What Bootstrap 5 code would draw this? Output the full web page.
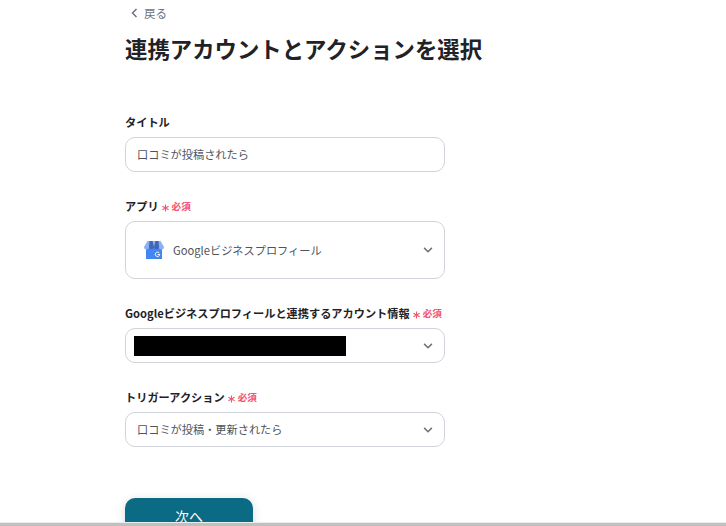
<!DOCTYPE html>
<html lang="ja">
    <head>
        <meta charset="UTF-8">
        <meta name="viewport" content="width=device-width, initial-scale=1.0">
        <title>連携アカウントとアクションを選択</title>
        <link href="https://cdn.jsdelivr.net/npm/bootstrap@5.3.2/dist/css/bootstrap.min.css" rel="stylesheet">
        <style>
            html, body { height: 100%; overflow: hidden; }
            body { font-family: "Noto Sans CJK JP", "Noto Sans", sans-serif; color: #212529; background: #fff; }
            .page-wrap { width: 320px; margin-left: 125px; padding-top: 5px; }
            .back-link { font-size: 11.5px; line-height: 16px; color: #6b7280; text-decoration: none; gap: 6px; padding-left: 6px; }
            .page-title { font-size: 22.4px; font-weight: 700; line-height: 32px; margin: 11px 0 50px; color: #1f2226; white-space: nowrap; }
            .field-block { margin-bottom: 26px; }
            .field-label { font-size: 11.2px; line-height: 16px; font-weight: 700; color: #1f2226; margin-bottom: 7px; gap: 3px; white-space: nowrap; }
            .req-mark { color: #f2536f; font-size: 9.6px; font-weight: 700; }
            .req-star { color: #f2536f; width: 7px; height: 8px; margin-top: 3px; flex: none; }
            .field-box { height: 35px; border: 1px solid #d0d3da; border-radius: 10px; padding: 0 11px; font-size: 11.2px; color: #50535a; }
            .field-box.tall { height: 58px; padding-left: 18px; }
            .chev { width: 10px; height: 6px; color: #6e7278; flex: none; }
            .redact { width: 212px; height: 20px; background: #000; margin-left: -3px; }
            .app-logo { width: 20px; height: 20px; margin-right: 9px; flex: none; }
            .next-btn { width: 128px; height: 36px; margin-top: 25px; background: #0b6a84; color: #fff; border: 0; border-radius: 10px; font-size: 14px; line-height: 1; padding: 0; box-shadow: 0 2px 10px rgba(30, 50, 70, .18); }
            .bottom-strip { position: fixed; left: 0; right: 0; bottom: 0; height: 4px; background: #c0c0c0; border-top: 1px solid #ececec; }
        </style>
    </head>
    <body>
        <div class="page-wrap">
            <a class="back-link d-flex align-items-center" href="#">
                <svg width="7" height="10" viewBox="0 0 7 10"><path d="M5.500 1 1.500 5l4 4" fill="none" stroke="currentColor" stroke-width="1.500"/></svg>
                戻る
            </a>
            <h1 class="page-title">連携アカウントとアクションを選択</h1>

            <div class="field-block">
                <div class="field-label">タイトル</div>
                <div class="field-box d-flex align-items-center">口コミが投稿されたら</div>
            </div>

            <div class="field-block">
                <div class="field-label d-flex align-items-center">アプリ
                    <svg class="req-star" viewBox="0 0 8 8"><path d="M4 0v8M.5 2l7 4M7.500 2l-7 4" stroke="currentColor" stroke-width="1.200"/></svg>
                    <span class="req-mark">必須</span>
                </div>
                <div class="field-box tall d-flex align-items-center justify-content-between">
                    <div class="d-flex align-items-center">
                        <svg class="app-logo" viewBox="0 0 20 20">
                            <rect x="2" y="7" width="16" height="12" fill="#4285f4"/>
                            <path d="M3.500 1h13L20 7a2.500 2.500 0 0 1-5 0 2.500 2.500 0 0 1-5 0 2.500 2.500 0 0 1-5 0 2.500 2.500 0 0 1-5 0z" fill="#8fb0ee"/>
                            <path d="M5.500 1h3L10 7a2.500 2.500 0 0 1-5 0zM11.500 1h3L15 7a2.500 2.500 0 0 1-5 0z" fill="#3f66b8"/>
                            <path d="M15.400 13.200a2.200 2.200 0 1 0 .3 1.300h-2" fill="none" stroke="#fff" stroke-width="1"/>
                        </svg>
                        Googleビジネスプロフィール
                    </div>
                    <svg class="chev" viewBox="0 0 11 7"><path d="M1 1l4.500 4.500L10 1" fill="none" stroke="currentColor" stroke-width="1.800"/></svg>
                </div>
            </div>

            <div class="field-block">
                <div class="field-label d-flex align-items-center">Googleビジネスプロフィールと連携するアカウント情報
                    <svg class="req-star" viewBox="0 0 8 8"><path d="M4 0v8M.5 2l7 4M7.500 2l-7 4" stroke="currentColor" stroke-width="1.200"/></svg>
                    <span class="req-mark">必須</span>
                </div>
                <div class="field-box d-flex align-items-center justify-content-between">
                    <div class="redact"></div>
                    <svg class="chev" viewBox="0 0 11 7"><path d="M1 1l4.500 4.500L10 1" fill="none" stroke="currentColor" stroke-width="1.800"/></svg>
                </div>
            </div>

            <div class="field-block">
                <div class="field-label d-flex align-items-center">トリガーアクション
                    <svg class="req-star" viewBox="0 0 8 8"><path d="M4 0v8M.5 2l7 4M7.500 2l-7 4" stroke="currentColor" stroke-width="1.200"/></svg>
                    <span class="req-mark">必須</span>
                </div>
                <div class="field-box d-flex align-items-center justify-content-between">
                    口コミが投稿・更新されたら
                    <svg class="chev" viewBox="0 0 11 7"><path d="M1 1l4.500 4.500L10 1" fill="none" stroke="currentColor" stroke-width="1.800"/></svg>
                </div>
            </div>

            <button type="button" class="btn next-btn">次へ</button>
        </div>
        <div class="bottom-strip"></div>
        <script src="https://cdn.jsdelivr.net/npm/bootstrap@5.3.2/dist/js/bootstrap.bundle.min.js"></script>
    </body>
</html>
